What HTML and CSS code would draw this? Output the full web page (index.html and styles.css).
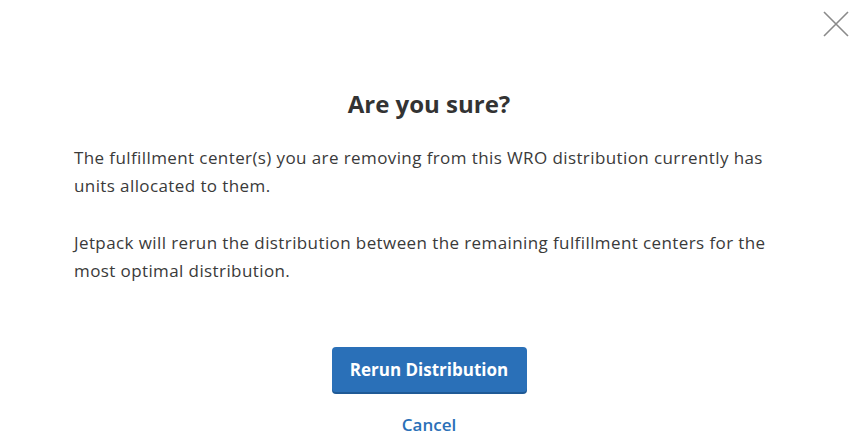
FILE: index.html
```html
<!DOCTYPE html>
<html>
<head>
<meta charset="utf-8">
<link rel="stylesheet" href="styles.css">
</head>
<body>
<div class="modal">
  <button class="close" aria-label="Close">
    <svg width="26" height="26" viewBox="0 0 26 26"><path d="M1 1L25 25M25 1L1 25" stroke="#8a8a8a" stroke-width="1.6" fill="none"/></svg>
  </button>
  <h1 class="title">Are you sure?</h1>
  <p class="text">The fulfillment center(s) you are removing from this WRO distribution currently has units allocated to them.</p>
  <p class="text">Jetpack will rerun the distribution between the remaining fulfillment centers for the most optimal distribution.</p>
  <div class="actions">
    <button class="primary">Rerun Distribution</button>
    <button class="link">Cancel</button>
  </div>
</div>
</body>
</html>
```
FILE: styles.css
```css
html, body {
  margin: 0;
  padding: 0;
  background: #ffffff;
}
body {
  font-family: "Open Sans", "Liberation Sans", sans-serif;
  color: #3a3a3a;
}
.modal {
  position: relative;
  width: 864px;
  height: 445px;
  box-sizing: border-box;
  padding: 87px 80px 0 74px;
}
.close {
  position: absolute;
  top: 11px;
  right: 15px;
  border: 0;
  background: none;
  padding: 0;
  width: 26px;
  height: 26px;
}
.close svg { display: block; }
.title {
  margin: 0 0 23px;
  text-align: center;
  font-size: 24px;
  font-weight: 700;
  line-height: 34px;
  color: #333333;
}
.text {
  margin: 0 0 29px;
  font-size: 17px;
  letter-spacing: 0.4px;
  line-height: 28px;
}
.actions {
  display: flex;
  flex-direction: column;
  align-items: center;
  margin-top: 62px;
}
.primary {
  font-family: inherit;
  width: 195px;
  height: 45px;
  border: 0;
  border-radius: 4px;
  background: #2a70b8;
  box-shadow: 0 2px 0 #1f5a96;
  color: #ffffff;
  font-size: 17px;
  font-weight: 700;
}
.link {
  font-family: inherit;
  margin-top: 21px;
  border: 0;
  background: none;
  color: #2a70b8;
  font-size: 17px;
  font-weight: 600;
  padding: 0;
}
```
